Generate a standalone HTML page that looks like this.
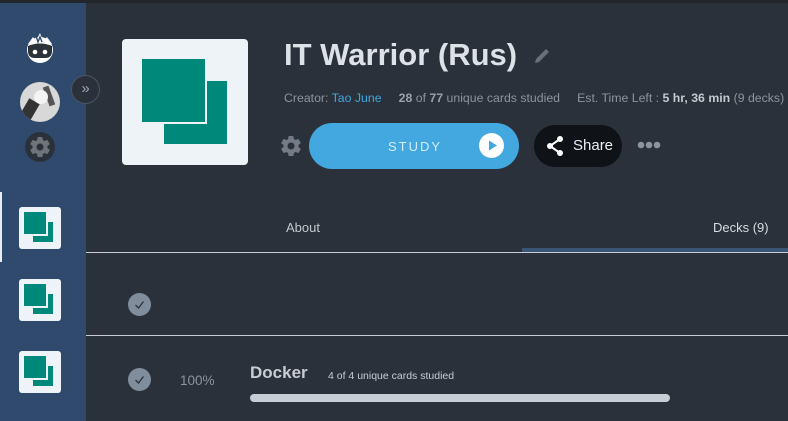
<!DOCTYPE html>
<html><head><meta charset="utf-8"><style>
*{margin:0;padding:0;box-sizing:border-box}
body{width:788px;height:421px;overflow:hidden;background:#2b313a;font-family:"Liberation Sans",sans-serif;position:relative}
.abs{position:absolute}
.side{left:0;top:0;width:86px;height:421px;background:#2f4a6c}
.top{left:0;top:0;width:788px;height:3px;background:#22262c}
.deckicon{position:absolute;left:19px;width:42px;height:42px;background:#eef3f7;border-radius:3px}
.deckicon i{position:absolute;background:#00897b}
.sep{left:86px;height:1px;background:#c9ced4;width:702px}
.chk{position:absolute;left:128px;width:23px;height:23px;border-radius:50%;background:#7f8d9c}
</style></head><body>
<div class="abs side"></div>
<div class="abs top"></div>
<!-- logo -->
<svg class="abs" style="left:25px;top:32px" width="30" height="32" viewBox="0 0 30 32">
<circle cx="15" cy="18" r="13" fill="#fff"/>
<path d="M3 12 L8 5 L11 9 L15 1 L18 9 L22 5 L27 12 Z" fill="#fff"/>
<path d="M11 4 L13 10 L15 5 L17 10" stroke="#2f4a6c" stroke-width="1.4" fill="none"/>
<path d="M3 14 Q15 9 27 14 L27 19 Q27 26 20 26 L10 26 Q3 26 3 19 Z" fill="#2b313a"/>
<circle cx="10" cy="20" r="2.3" fill="#fff"/><circle cx="20" cy="20" r="2.3" fill="#fff"/>
</svg>
<!-- avatar -->
<div class="abs" style="left:20px;top:82px;width:40px;height:40px;border-radius:50%;background:#d8d8d8;overflow:hidden">
<div class="abs" style="left:4px;top:18px;width:12px;height:18px;background:#333;transform:rotate(30deg)"></div>
<div class="abs" style="left:26px;top:4px;width:6px;height:20px;background:#555;transform:rotate(-20deg)"></div>
<div class="abs" style="left:14px;top:8px;width:14px;height:14px;border-radius:50%;background:#f4f4f4"></div>
</div>
<!-- settings -->
<div class="abs" style="left:25px;top:132px;width:30px;height:30px;border-radius:50%;background:#2b313a"></div>
<svg class="abs" style="left:28px;top:135px" width="24" height="24" viewBox="0 0 24 24"><path fill="#6f747b" d="M19.4 13c.04-.33.06-.66.06-1s-.02-.67-.06-1l2.1-1.65c.2-.15.25-.42.12-.64l-2-3.46c-.12-.22-.39-.3-.61-.22l-2.49 1c-.52-.4-1.08-.73-1.69-.98l-.38-2.65A.49.49 0 0 0 14 2h-4c-.25 0-.46.18-.49.42l-.38 2.65c-.61.25-1.17.59-1.69.98l-2.49-1c-.23-.09-.49 0-.61.22l-2 3.46c-.13.22-.07.49.12.64L4.57 11c-.04.33-.07.67-.07 1s.03.67.07 1l-2.11 1.65c-.19.15-.24.42-.12.64l2 3.46c.12.22.39.3.61.22l2.49-1c.52.4 1.08.73 1.69.98l.38 2.65c.03.24.24.42.49.42h4c.25 0 .46-.18.49-.42l.38-2.65c.61-.25 1.17-.59 1.69-.98l2.49 1c.23.09.49 0 .61-.22l2-3.46c.12-.22.07-.49-.12-.64L19.4 13zM12 15.5A3.5 3.5 0 1 1 12 8.5a3.5 3.5 0 0 1 0 7z"/></svg>
<!-- expand -->
<div class="abs" style="left:71px;top:75px;width:29px;height:29px;border-radius:50%;background:#2b313a;border:1px solid #4b5563;color:#9aa9bb;font-size:15px;text-align:center;line-height:26px">»</div>
<div class="abs" style="left:0;top:192px;width:2px;height:70px;background:#e8ecf0"></div>
<div class="deckicon" style="top:207px"><i style="left:14px;top:15px;width:20px;height:20px"></i><i style="left:5px;top:5px;width:24px;height:24px;border:0 solid #eef3f7;border-right-width:2px;border-bottom-width:2px"></i></div>
<div class="deckicon" style="top:279px"><i style="left:14px;top:15px;width:20px;height:20px"></i><i style="left:5px;top:5px;width:24px;height:24px;border:0 solid #eef3f7;border-right-width:2px;border-bottom-width:2px"></i></div>
<div class="deckicon" style="top:351px"><i style="left:14px;top:15px;width:20px;height:20px"></i><i style="left:5px;top:5px;width:24px;height:24px;border:0 solid #eef3f7;border-right-width:2px;border-bottom-width:2px"></i></div>
<!-- big deck -->
<div class="abs" style="left:122px;top:39px;width:126px;height:126px;background:#eef3f7;border-radius:4px">
<div class="abs" style="left:42px;top:42px;width:63px;height:63px;background:#00897b"></div>
<div class="abs" style="left:20px;top:20px;width:65px;height:65px;background:#00897b;border:0 solid #eef3f7;border-right-width:2px;border-bottom-width:2px"></div>
</div>
<div class="abs" style="left:284px;top:37px;font-size:31px;font-weight:bold;color:#dde2e8">IT Warrior (Rus)</div>
<svg class="abs" style="left:533px;top:47px" width="18" height="18" viewBox="0 0 18 18"><path d="M2 16 L3 12 L13 2 L16 5 L6 15 Z" fill="#6a7079"/></svg>
<div class="abs" style="left:284px;top:91px;font-size:12.3px;color:#8d949d;white-space:nowrap">Creator: <span style="color:#3fa9e0">Tao June</span>&nbsp;&nbsp;&nbsp;&nbsp;&nbsp;<b style="color:#9aa1a9">28</b> of <b style="color:#9aa1a9">77</b> unique cards studied&nbsp;&nbsp;&nbsp;&nbsp;&nbsp;Est. Time Left : <b style="color:#c4c9cf">5 hr, 36 min</b> (9 decks)</div>
<svg class="abs" style="left:279px;top:134px" width="24" height="24" viewBox="0 0 24 24"><path fill="#737b86" d="M19.4 13c.04-.33.06-.66.06-1s-.02-.67-.06-1l2.1-1.650c.2-.15.25-.42.12-.64l-2-3.46c-.12-.22-.39-.3-.61-.22l-2.49 1c-.52-.4-1.08-.73-1.690-.98l-.38-2.650A.49.49 0 0 0 14 2h-4c-.25 0-.46.18-.49.42l-.38 2.65c-.61.25-1.17.59-1.69.98l-2.49-1c-.23-.09-.49 0-.61.22l-2 3.46c-.13.22-.07.49.12.64L4.57 11c-.04.33-.07.67-.07 1s.03.67.07 1l-2.11 1.65c-.19.15-.24.42-.12.64l2 3.46c.12.22.39.3.61.22l2.49-1c.52.4 1.08.73 1.69.98l.38 2.65c.03.24.24.42.49.42h4c.25 0 .46-.18.49-.42l.38-2.65c.61-.25 1.17-.59 1.69-.98l2.49 1c.23.09.49 0 .61-.22l2-3.46c.12-.22.07-.49-.12-.64L19.4 13zM12 15.5A3.5 3.5 0 1 1 12 8.5a3.5 3.5 0 0 1 0 7z"/></svg>
<div class="abs" style="left:309px;top:123px;width:210px;height:46px;border-radius:23px;background:#42a8df"></div>
<div class="abs" style="left:388px;top:139px;font-size:13px;letter-spacing:2px;color:#d6ecf8">STUDY</div>
<div class="abs" style="left:479px;top:133px;width:25px;height:25px;border-radius:50%;background:#fff"></div>
<svg class="abs" style="left:479px;top:133px" width="25" height="25"><path d="M10 7.5 L18 12.5 L10 17.5 Z" fill="#42a8df"/></svg>
<div class="abs" style="left:534px;top:125px;width:88px;height:42px;border-radius:21px;background:#0f1216"></div>
<svg class="abs" style="left:545px;top:135px" width="22" height="22" viewBox="0 0 22 22"><path d="M15 4 L5 11 L15 18" stroke="#fff" stroke-width="2" fill="none"/><circle cx="15" cy="4" r="3" fill="#fff"/><circle cx="5" cy="11" r="3" fill="#fff"/><circle cx="15" cy="18" r="3" fill="#fff"/></svg>
<div class="abs" style="left:573px;top:137px;font-size:15px;color:#eceff2">Share</div>
<svg class="abs" style="left:636px;top:140px" width="26" height="10"><circle cx="5" cy="5" r="3.3" fill="#8d949d"/><circle cx="13" cy="5" r="3.3" fill="#8d949d"/><circle cx="21" cy="5" r="3.3" fill="#8d949d"/></svg>
<div class="abs" style="left:286px;top:220px;font-size:13px;color:#c4c9cf">About</div>
<div class="abs" style="left:713px;top:220px;font-size:13px;color:#d7dce1">Decks (9)</div>
<div class="abs" style="left:522px;top:248px;width:266px;height:4px;background:#3a5475"></div>
<div class="abs sep" style="top:252px"></div>
<div class="abs sep" style="top:335px"></div>
<div class="chk" style="top:293px"><svg width="23" height="23"><path d="M7.5 12 L10.5 15 L15.5 8.5" stroke="#2b313a" stroke-width="1.3" fill="none"/></svg></div>
<div class="chk" style="top:368px"><svg width="23" height="23"><path d="M7.5 12 L10.5 15 L15.5 8.5" stroke="#2b313a" stroke-width="1.3" fill="none"/></svg></div>
<div class="abs" style="left:180px;top:373px;font-size:13.5px;color:#8d949d">100%</div>
<div class="abs" style="left:250px;top:363px;font-size:17px;font-weight:bold;color:#c8cdd3">Docker</div>
<div class="abs" style="left:328px;top:370px;font-size:10.5px;color:#c8cdd3">4 of 4 unique cards studied</div>
<div class="abs" style="left:250px;top:394px;width:420px;height:8px;border-radius:4px;background:#c7cdd4"></div>
</body></html>
